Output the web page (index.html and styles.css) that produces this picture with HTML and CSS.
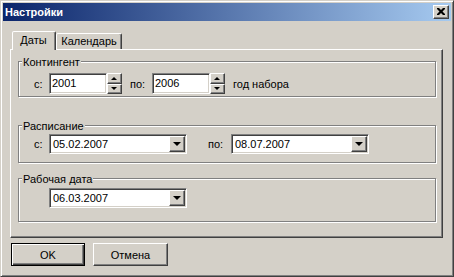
FILE: index.html
```html
<!DOCTYPE html>
<html lang="ru">
<head>
<meta charset="utf-8">
<title>Настройки</title>
<link rel="stylesheet" href="styles.css">
</head>
<body>
<div class="window">
  <div class="titlebar">
    <span class="title">Настройки</span>
    <span class="close"><svg width="8" height="7" viewBox="0 0 8 7"><path d="M0 0h2l2 2 2-2h2v1l-2.5 2.5 2.5 2.5v1h-2l-2-2-2 2h-2v-1l2.5-2.5-2.5-2.5z" fill="#000"/></svg></span>
  </div>
  <div class="client">
    <div class="tabs">
      <div class="tab active">Даты</div>
      <div class="tab">Календарь</div>
    </div>
    <div class="panel">
      <div class="group g1">
        <span class="legend">Контингент</span>
        <div class="row">
          <span class="lbl l-c">с:</span>
          <span class="field num">2001</span>
          <span class="spinner"><span class="sb up"><i></i></span><span class="sb down"><i></i></span></span>
          <span class="lbl l-po1">по:</span>
          <span class="field num">2006</span>
          <span class="spinner"><span class="sb up"><i></i></span><span class="sb down"><i></i></span></span>
          <span class="lbl tail">год набора</span>
        </div>
      </div>
      <div class="group g2">
        <span class="legend">Расписание</span>
        <div class="row">
          <span class="lbl l-c">с:</span>
          <span class="combo"><span class="combo-text">05.02.2007</span><span class="drop"><i></i></span></span>
          <span class="lbl l-po2">по:</span>
          <span class="combo"><span class="combo-text">08.07.2007</span><span class="drop"><i></i></span></span>
        </div>
      </div>
      <div class="group g3">
        <span class="legend">Рабочая дата</span>
        <div class="row">
          <span class="combo"><span class="combo-text">06.03.2007</span><span class="drop"><i></i></span></span>
        </div>
      </div>
    </div>
    <div class="buttons">
      <button class="btn default">OK</button>
      <button class="btn">Отмена</button>
    </div>
  </div>
</div>
</body>
</html>
```
FILE: styles.css
```css
* { box-sizing: border-box; }

body {
  margin: 0;
  background: #d4d0c8;
  font: 11px "Liberation Sans", Arial, sans-serif;
  color: #000;
}

.window {
  width: 454px;
  height: 277px;
  background: #d4d0c8;
  border: 1px solid;
  border-color: #d4d0c8 #404040 #404040 #d4d0c8;
  box-shadow: inset 1px 1px #fff, inset -1px -1px #808080;
  padding: 2px;
}

.titlebar {
  height: 18px;
  background: linear-gradient(to right, #0a246a, #a6caf0);
  display: flex;
  align-items: center;
  justify-content: space-between;
  padding: 0 2px;
}

.title {
  color: #fff;
  font-weight: bold;
  line-height: 18px;
}

.close {
  width: 16px;
  height: 14px;
  background: #d4d0c8;
  border: 1px solid;
  border-color: #fff #404040 #404040 #fff;
  box-shadow: inset -1px -1px #808080;
  display: flex;
  align-items: center;
  justify-content: center;
  padding: 0 1px 1px 0;
}
.close svg { display: block; }

.client {
  padding: 10px 0 0 7px;
}

.tabs {
  display: flex;
  align-items: flex-end;
  height: 18px;
  padding-left: 2px;
}

.tab {
  height: 16px;
  border: 1px solid;
  border-bottom: none;
  border-color: #fff #404040 transparent #fff;
  box-shadow: inset -1px 0 #808080;
  border-radius: 2px 2px 0 0;
  background: #d4d0c8;
  text-align: center;
  line-height: 15px;
  width: 66px;
}

.tab.active {
  position: relative;
  z-index: 1;
  width: 44px;
  height: 19px;
  margin-bottom: -1px;
  line-height: 16px;
  padding-right: 1px;
}

.panel {
  width: 433px;
  height: 189px;
  border: 1px solid;
  border-color: #fff #404040 #404040 #fff;
  box-shadow: inset -1px -1px #808080;
  padding: 11px 0 0 7px;
}

.group {
  position: relative;
  width: 418px;
  border: 1px solid #808080;
  box-shadow: inset 1px 1px #fff, 1px 1px #fff;
}

.g1 { height: 36px; padding: 11px 0 0 15px; }
.g2 { height: 38px; margin-top: 28px; padding: 8px 0 0 15px; }
.g3 { height: 44px; margin-top: 15px; padding: 9px 0 0 30px; }

.legend {
  position: absolute;
  top: -6px;
  left: 3px;
  padding: 0 1px;
  background: #d4d0c8;
  line-height: 13px;
}

.row {
  display: flex;
  align-items: center;
}

.lbl { white-space: nowrap; }
.l-c { width: 15px; }
.l-po1 { width: 22px; margin-left: 8px; }
.l-po2 { width: 23px; margin-left: 21px; }
.tail { margin-left: 8px; }

.field {
  width: 58px;
  height: 21px;
  background: #fff;
  border: 1px solid;
  border-color: #808080 #fff #fff #808080;
  box-shadow: inset 1px 1px #404040, inset -1px -1px #d4d0c8;
  padding: 0 0 0 2px;
  line-height: 19px;
}

.spinner {
  width: 15px;
  height: 21px;
  display: flex;
  flex-direction: column;
}

.sb {
  flex: 1;
  border: 1px solid;
  border-color: #fff #404040 #404040 #fff;
  box-shadow: inset -1px -1px #808080;
  display: flex;
  align-items: center;
  justify-content: center;
  padding-right: 1px;
}

.sb i {
  width: 0;
  height: 0;
  border-left: 3px solid transparent;
  border-right: 3px solid transparent;
}
.sb.up i { border-bottom: 3px solid #000; }
.sb.down i { border-top: 3px solid #000; }

.combo {
  width: 138px;
  height: 20px;
  background: #fff;
  border: 1px solid;
  border-color: #808080 #fff #fff #808080;
  box-shadow: inset 1px 1px #404040, inset -1px -1px #d4d0c8;
  padding: 1px;
  display: flex;
}

.combo-text {
  flex: 1;
  padding-left: 2px;
  line-height: 16px;
}

.drop {
  width: 16px;
  height: 16px;
  background: #d4d0c8;
  border: 1px solid;
  border-color: #fff #404040 #404040 #fff;
  box-shadow: inset -1px -1px #808080;
  display: flex;
  align-items: center;
  justify-content: center;
  padding-right: 1px;
}

.drop i {
  width: 0;
  height: 0;
  border-left: 4px solid transparent;
  border-right: 4px solid transparent;
  border-top: 4px solid #000;
}

.buttons {
  display: flex;
  gap: 8px;
  margin-top: 5px;
  padding-left: 1px;
}

.btn {
  font: inherit;
  color: #000;
  width: 75px;
  height: 23px;
  background: #d4d0c8;
  border: 1px solid;
  border-color: #fff #404040 #404040 #fff;
  box-shadow: inset -1px -1px #808080;
  padding: 0;
}

.btn.default {
  width: 74px;
  border: 1px solid #000;
  box-shadow: inset 1px 1px #fff, inset -1px -1px #404040, inset -2px -2px #808080;
}
```
